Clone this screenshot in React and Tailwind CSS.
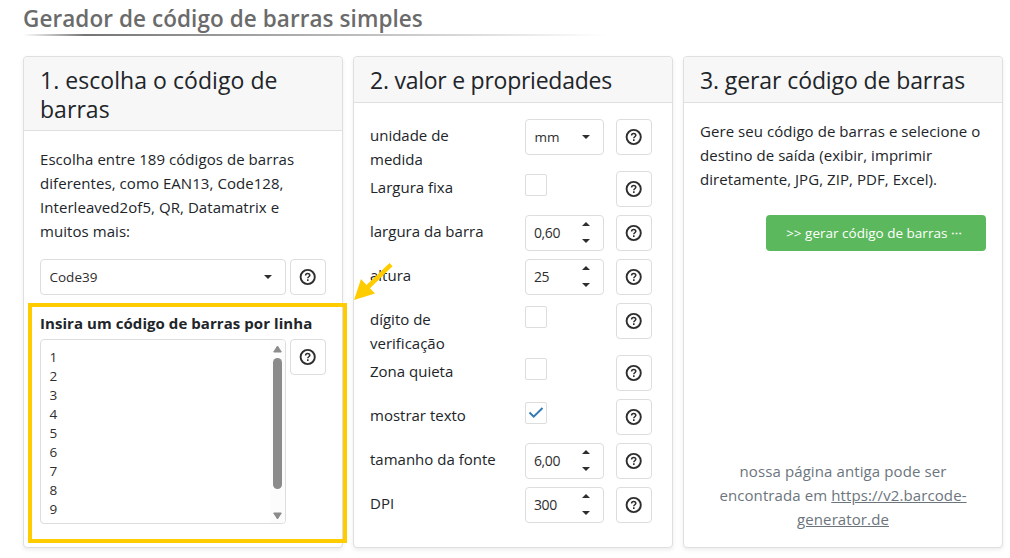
function HelpIcon() {
  return (
    <svg width="18" height="18" viewBox="0 0 18 18" fill="none" stroke="#2e2e2e">
      <circle cx="8.7" cy="9" r="7.1" strokeWidth="1.9" />
      <path d="M6.6 7.5c0-1.2.9-2 2.1-2s2.1.8 2.1 1.8c0 1.4-2 1.5-2 3" strokeWidth="1.5" />
      <path d="M8.8 11.3v1.6" strokeWidth="1.6" />
    </svg>
  );
}

function HelpButton() {
  return (
    <button className="w-9 h-9 shrink-0 flex items-center justify-center bg-white border border-[#dddddd] rounded">
      <HelpIcon />
    </button>
  );
}

function Caret({ up }) {
  return (
    <svg width="8" height="4" viewBox="0 0 8 4" fill="#2e2e2e">
      <path d={up ? "M0 4 4 0l4 4z" : "M0 0h8L4 4z"} />
    </svg>
  );
}

function Select({ value, className }) {
  return (
    <div
      className={`h-9 flex items-center justify-between pl-[8.5px] pr-[13px] border border-[#dddddd] rounded text-[13.5px] text-[#2e2e2e] ${className}`}
    >
      <span>{value}</span>
      <Caret />
    </div>
  );
}

function NumberBox({ value }) {
  return (
    <div className="w-[79px] h-9 flex items-center justify-between pl-2 pr-[13px] border border-[#dddddd] rounded text-[14px] tracking-[-0.4px] text-[#2e2e2e]">
      <span>{value}</span>
      <span className="flex flex-col gap-[13px] pb-px">
        <Caret up />
        <Caret />
      </span>
    </div>
  );
}

function Checkbox({ checked }) {
  return (
    <div className="w-[22px] h-[22px] mt-[3px] flex items-center justify-center border border-[#dddddd] rounded-[2px]">
      {checked && (
        <svg width="16" height="12" viewBox="0 0 16 12" fill="none" stroke="#337ab7" strokeWidth="2">
          <path d="m1.5 5.5 4.2 4.2L14.5 1" />
        </svg>
      )}
    </div>
  );
}

function Card({ title, titleClass = "pb-[7px] tracking-[-0.1px]", children }) {
  return (
    <section className="w-80 flex flex-col bg-white border border-[#dfdfdf] rounded shadow-[0_2px_4px_rgba(0,0,0,0.075)]">
      <h2
        className={`px-4 pt-[9px] bg-[#f7f7f7] border-b border-[#dfdfdf] rounded-t text-[23px] leading-[29px] ${titleClass}`}
      >
        {title}
      </h2>
      <div className="flex-1 flex flex-col p-4">{children}</div>
    </section>
  );
}

function Row({ label, children }) {
  return (
    <div className="min-h-11 flex items-start">
      <div className="w-[155px] pt-1 leading-6">{label}</div>
      <div className="w-[91px]">{children}</div>
      <HelpButton />
    </div>
  );
}

const lines = [1, 2, 3, 4, 5, 6, 7, 8, 9];

function App() {
  return (
    <div className="relative w-[1010px] h-[558px] overflow-hidden bg-white font-['Open_Sans',sans-serif] text-[15px] leading-6 text-[#212529]">
      <header className="pl-[23px] pt-1">
        <h1 className="h-[30px] text-[22.5px] leading-[30px] tracking-[0.07px] font-semibold text-[#6b6b6b]">
          Gerador de código de barras simples
        </h1>
        <div className="w-[584px] h-0.5 bg-[linear-gradient(to_right,transparent,#757575_62px,transparent)]" />
      </header>

      <main className="flex gap-2.5 pl-[23px] mt-5 h-[492px]">
        <Card title={<>1. escolha o código de<br />barras</>} titleClass="pb-[6px] tracking-[0.05px]">
          <p className="tracking-[0.06px]">
            Escolha entre 189 códigos de barras<br />
            diferentes, como EAN13, Code128,<br />
            Interleaved2of5, QR, Datamatrix e<br />
            muitos mais:
          </p>
          <div className="mt-4 flex gap-1">
            <Select value="Code39" className="w-[246px]" />
            <HelpButton />
          </div>
          <div className="mt-4 mb-1 font-bold tracking-[0.06px] whitespace-nowrap">Insira um código de barras por linha</div>
          <div className="flex gap-1">
            <div className="w-[246px] h-[185px] flex justify-between border border-[#dddddd] rounded overflow-hidden">
              <div className="pl-[8.5px] pt-2 text-[13.5px] leading-[19px] text-[#2e2e2e]">
                {lines.map((n) => (
                  <div key={n}>{n}</div>
                ))}
              </div>
              <div className="w-[15px] flex flex-col items-center pt-[5px] pb-[3px] bg-[#fcfcfc]">
                <svg width="9" height="8" viewBox="0 0 9 8" fill="#8b8b8b" stroke="#8b8b8b" strokeLinejoin="round">
                  <path d="M4.5 1 8.3 7H.7z" />
                </svg>
                <div className="mt-[5px] w-[9px] h-[131px] rounded-full bg-[#8b8b8b]" />
                <svg className="mt-auto" width="9" height="8" viewBox="0 0 9 8" fill="#8b8b8b" stroke="#8b8b8b" strokeLinejoin="round">
                  <path d="M.7 1h7.6L4.5 7z" />
                </svg>
              </div>
            </div>
            <HelpButton />
          </div>
        </Card>

        <Card title="2. valor e propriedades" titleClass="pb-[7px] tracking-[-0.25px]">
          <Row label={<>unidade de<br />medida</>}>
            <Select value="mm" className="w-[79px]" />
          </Row>
          <Row label="Largura fixa">
            <Checkbox />
          </Row>
          <Row label="largura da barra">
            <NumberBox value="0,60" />
          </Row>
          <Row label="altura">
            <NumberBox value="25" />
          </Row>
          <Row label={<>dígito de<br />verificação</>}>
            <Checkbox />
          </Row>
          <Row label="Zona quieta">
            <Checkbox />
          </Row>
          <Row label="mostrar texto">
            <Checkbox checked />
          </Row>
          <Row label="tamanho da fonte">
            <NumberBox value="6,00" />
          </Row>
          <Row label="DPI">
            <NumberBox value="300" />
          </Row>
        </Card>

        <Card title="3. gerar código de barras">
          <p className="tracking-[0.06px] whitespace-nowrap">
            Gere seu código de barras e selecione o<br />
            destino de saída (exibir, imprimir<br />
            diretamente, JPG, ZIP, PDF, Excel).
          </p>
          <button className="mt-6 self-end w-[220px] h-9 pr-1 rounded bg-[#5cb85c] text-white text-[13.5px] font-medium whitespace-nowrap">
            &gt;&gt; gerar código de barras <span className="text-[11px] font-bold">⋯</span>
          </button>
          <p className="mt-auto text-center tracking-[0.1px] text-[#6c757d]">
            nossa página antiga pode ser<br />
            encontrada em <a className="underline">https://v2.barcode-</a><br />
            <a className="underline">generator.de</a>
          </p>
        </Card>
      </main>

      {/* highlight around the multi-line input */}
      <div className="absolute left-[28px] top-[303px] w-[319px] h-[240px] border-4 border-[#ffcc00]" />
      <svg className="absolute left-[353px] top-[260px]" width="42" height="42" viewBox="0 0 42 42" fill="#ffcc00">
        <path d="M1 40 8 19l5.500 6L36.500 3l3 3.200L17 28.200l5 5.300z" />
      </svg>
    </div>
  );
}

export default App;
